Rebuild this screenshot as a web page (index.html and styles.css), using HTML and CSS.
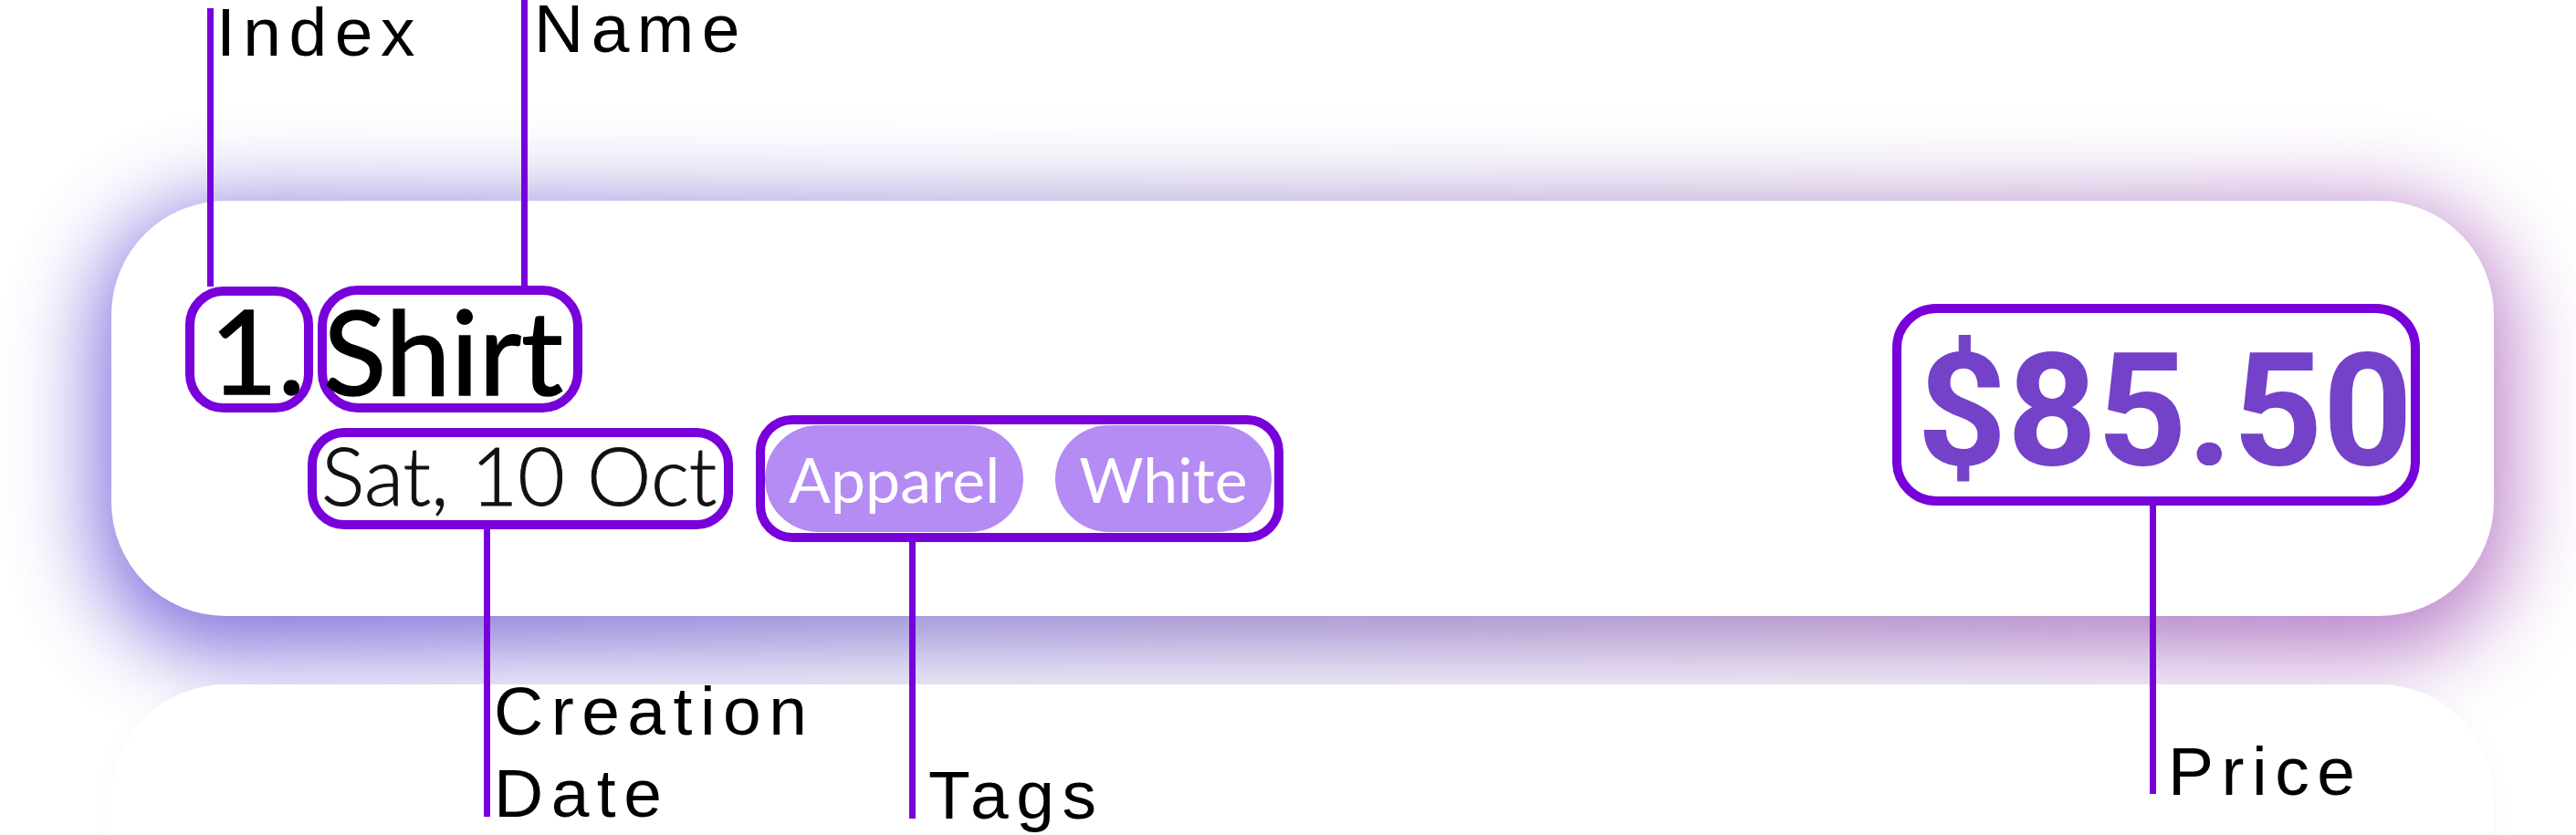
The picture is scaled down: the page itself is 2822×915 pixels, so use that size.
FILE: index.html
```html
<!DOCTYPE html>
<html lang="en">
<head>
<meta charset="utf-8">
<title>Order item anatomy</title>
<link rel="stylesheet" href="styles.css">
</head>
<body>
<main class="page">
  <section class="list">
    <article class="item item-glow">
      <div class="item-main">
        <div class="title-row">
          <span class="hl hl-index">
            <span class="index">1.</span>
            <i class="tick"></i>
            <span class="note">Index</span>
          </span>
          <span class="hl hl-name">
            <span class="name">Shirt</span>
            <i class="tick"></i>
            <span class="note">Name</span>
          </span>
        </div>
        <div class="meta-row">
          <span class="hl hl-date">
            <span class="date">Sat, 10 Oct</span>
            <i class="tick"></i>
            <span class="note">Creation Date</span>
          </span>
          <span class="hl hl-tags">
            <span class="tag">Apparel</span>
            <span class="tag">White</span>
            <i class="tick"></i>
            <span class="note">Tags</span>
          </span>
        </div>
      </div>
      <div class="hl hl-price">
        <span class="price">$85.50</span>
        <i class="tick"></i>
        <span class="note">Price</span>
      </div>
    </article>
    <article class="item item-next"></article>
  </section>
</main>
</body>
</html>
```

FILE: styles.css
```css
html, body {
  margin: 0;
  padding: 0;
  background: #ffffff;
  overflow: hidden;
}

.page {
  position: relative;
  z-index: 0;
  width: 2822px;
  height: 915px;
  box-sizing: border-box;
  padding: 220px 90px 0 122px;
  overflow: hidden;
  background: #ffffff;
}

.list {
  display: flex;
  flex-direction: column;
  gap: 75px;
}

.item {
  position: relative;
  height: 455px;
  box-sizing: border-box;
  border-radius: 125px;
  background: #ffffff;
  display: flex;
  justify-content: space-between;
  align-items: flex-start;
  padding: 93px 81px 0 81px;
}

.item-glow::before {
  content: "";
  position: absolute;
  left: -15px;
  right: -15px;
  top: 5px;
  bottom: -40px;
  border-radius: 140px;
  background: linear-gradient(90deg, #5338d2 0%, #7360c4 35%, #8a5fb2 70%, #a24db6 100%);
  filter: blur(48px);
  opacity: 0.75;
  z-index: -1;
}

.item-next {
  box-shadow: 0 0 24px rgba(60, 40, 90, 0.03);
}

/* layout of the row */
.item-main {
  display: flex;
  flex-direction: column;
  gap: 3px;
}

.title-row {
  display: flex;
  align-items: flex-end;
  gap: 5px;
}

.meta-row {
  display: flex;
  align-items: center;
  gap: 25px;
  margin-left: 134px;
}

/* highlight boxes of the annotation */
.hl {
  position: relative;
  display: flex;
  align-items: flex-start;
  box-sizing: border-box;
  border: 10px solid #7800da;
}

.hl-index {
  width: 140px;
  height: 138px;
  border-radius: 42px;
  padding-left: 17px;
}

.hl-name {
  width: 290px;
  height: 139px;
  border-radius: 44px;
}

.hl-date {
  width: 466px;
  height: 111px;
  border-radius: 40px;
  padding-left: 5px;
}

.hl-tags {
  height: 139px;
  border-radius: 40px;
  align-items: center;
  gap: 35px;
  padding: 0 3px 0 0;
}

.hl-price {
  width: 578px;
  height: 221px;
  border-radius: 48px;
  margin-top: 20px;
  padding-left: 17px;
}

/* texts of the item */
.index,
.name {
  font-family: Lato, "Noto Sans", sans-serif;
  font-weight: 400;
  font-size: 128px;
  line-height: 117px;
  color: #000000;
  -webkit-text-stroke: 1.5px #000000;
}

.name {
  line-height: 121px;
  margin-left: -4px;
}

.date {
  font-family: Lato, "Noto Sans", sans-serif;
  font-weight: 300;
  font-size: 89px;
  line-height: 81px;
  color: #111111;
  -webkit-text-stroke: 1px #111111;
  white-space: nowrap;
}

.tag {
  display: block;
  height: 117px;
  box-sizing: border-box;
  padding: 0 26px;
  border-radius: 59px;
  background: #b58bf4;
  color: #ffffff;
  font-family: Lato, "Noto Sans", sans-serif;
  font-weight: 400;
  font-size: 68px;
  line-height: 117px;
  white-space: nowrap;
}

.price {
  font-family: Roboto, "Liberation Sans", sans-serif;
  font-weight: 700;
  font-size: 172px;
  line-height: 214px;
  color: #7441c9;
  white-space: nowrap;
}

/* leader lines and labels */
.tick {
  position: absolute;
  z-index: 3;
  width: 7px;
  background: #7800da;
}

.note {
  position: absolute;
  z-index: 3;
  font-family: "Liberation Sans", Arial, sans-serif;
  font-size: 75px;
  line-height: 90px;
  letter-spacing: 8.5px;
  color: #000000;
  white-space: nowrap;
}

.hl-index .tick { left: 14px; bottom: calc(100% + 10px); height: 305px; }
.hl-index .note { left: 24px; top: -319px; line-height: 60px; }

.hl-name .tick { left: 213px; bottom: calc(100% + 10px); height: 313px; }
.hl-name .note { left: 227px; top: -322px; line-height: 60px; }

.hl-date .tick { left: 183px; top: calc(100% + 10px); height: 315px; }
.hl-date .note { left: 194px; top: 255px; width: 400px; white-space: normal; }

.hl-tags .tick { left: 158px; top: calc(100% + 10px); height: 303px; }
.hl-tags .note { left: 179px; top: 361px; }

.hl-price .tick { left: 272px; top: calc(100% + 10px); height: 316px; }
.hl-price .note { left: 292px; top: 457px; }
```
